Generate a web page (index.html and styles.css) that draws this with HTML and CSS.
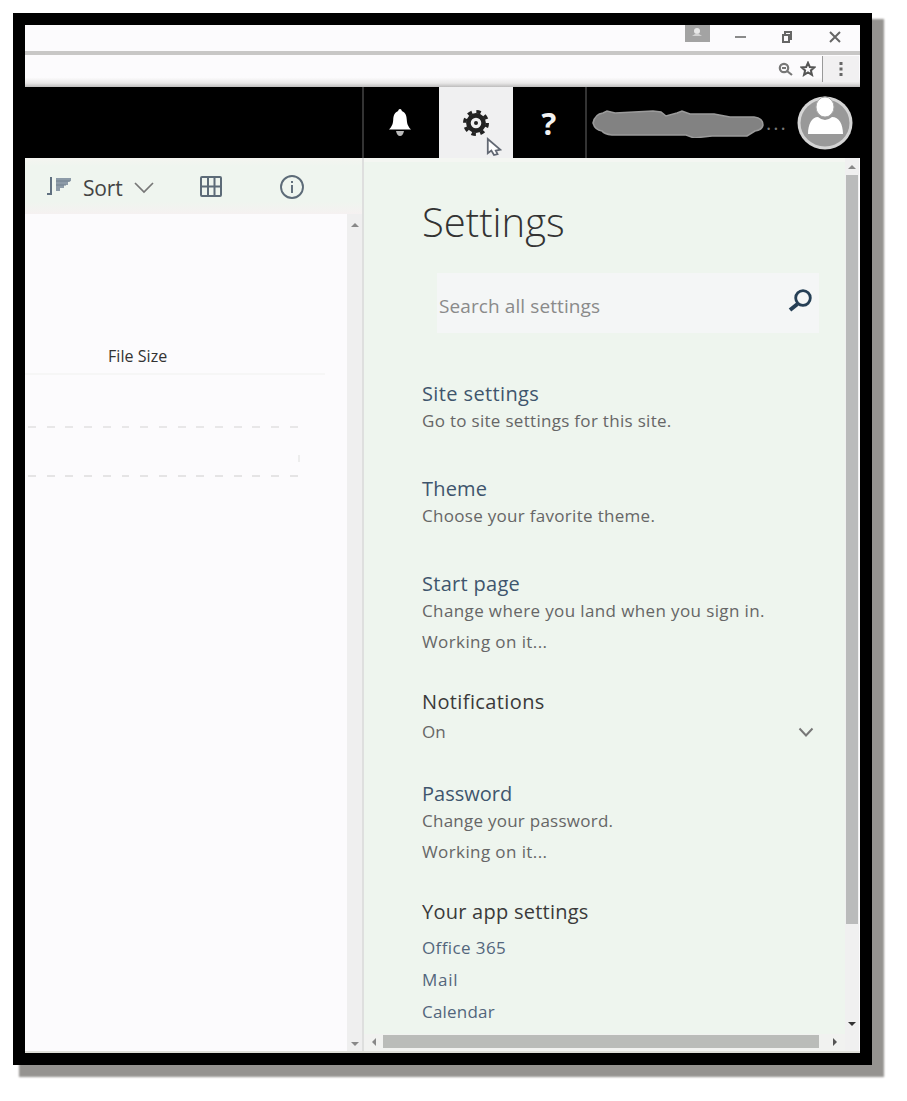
FILE: index.html
```html
<!DOCTYPE html>
<html lang="en">
<head>
<meta charset="utf-8">
<title>Settings</title>
<link rel="stylesheet" href="styles.css">
</head>
<body>
<div class="window">
  <div class="titlebar">
    <svg class="win-user" width="25" height="17" viewBox="0 0 25 17"><rect width="25" height="17" fill="#a3a3a3"/><circle cx="12" cy="6" r="3" fill="#e8e8e8"/><path d="M7 11q5-5 10 0z" fill="#d2d2d2"/></svg>
    <svg class="win-min" width="14" height="14" viewBox="0 0 14 14"><path d="M1 7h11" stroke="#8a8a8a" stroke-width="2"/></svg>
    <svg class="win-max" width="14" height="14" viewBox="0 0 14 14" fill="none" stroke="#666" stroke-width="2"><path d="M3 5h6v7H3zM5 4V2h6v7h-2"/></svg>
    <svg class="win-close" width="14" height="14" viewBox="0 0 14 14"><path d="M2 2l10 10M12 2L2 12" stroke="#666" stroke-width="2"/></svg>
  </div>
  <div class="addressbar">
    <svg class="addr-zoom" width="15" height="15" viewBox="0 0 15 15" fill="none" stroke="#777" stroke-width="2.200"><circle cx="6" cy="6" r="4.200"/><path d="M9 9l5 4M4 6h4"/></svg>
    <svg class="addr-star" width="16" height="16" viewBox="0 0 16 16" fill="none" stroke="#555" stroke-width="2"><path d="M8 1.800l1.800 4.200 4.600.4-3.500 3 1.100 4.500L8 11.500l-4 2.400 1.100-4.500-3.500-3 4.600-.4z"/></svg>
    <div class="addr-menu"><svg width="6" height="16" viewBox="0 0 6 16" fill="#666"><rect x="1.500" y="1" width="3" height="3"/><rect x="1.500" y="6.500" width="3" height="3"/><rect x="1.500" y="12" width="3" height="3"/></svg></div>
  </div>
  <div class="suitebar">
    <div class="suite-cell suite-bell"><svg width="24" height="28" viewBox="0 0 24 28" fill="#fff"><path d="M12 0c1.200 0 1.800 1 1.800 2 4 1.500 4.700 5 5 9 .3 4.500 1.400 6.500 4.200 9.500H1C3.800 17.500 4.900 15.500 5.200 11c.3-4 1-7.500 5-9 0-1 .6-2 1.800-2z"/><path d="M8 22h8q-1 5-4 5t-4-5z" fill="#bbb"/></svg></div>
    <div class="suite-cell suite-gear">
      <svg width="28" height="28" viewBox="0 0 28 28"><g fill="none" stroke="#222"><circle cx="14" cy="14" r="7.600" stroke-width="4.600"/><circle cx="14" cy="14" r="11.200" stroke-width="3.600" stroke-dasharray="4.400 4.400"/></g><circle cx="14" cy="14" r="2" fill="#222"/></svg>
      <svg class="cursor" width="16" height="20" viewBox="0 0 18 22"><path d="M2 2v16l4-3 3 5 4-1-2-4 5-1z" fill="#fff" stroke="#626873" stroke-width="2"/></svg>
    </div>
    <div class="suite-cell suite-help">?</div>
    <div class="suite-user">
      <svg width="172" height="30" viewBox="0 0 172 30"><path d="M1 15Q3 6 11 5L15 3 23 5 61 3 69 4 74 8 85 5 90 3 98 6 122 6 138 9 162 9Q171 10 171 17 170 22 163 23L155 28 120 28 102 30 94 27 60 27 20 27Q12 26 10 23 3 22 1 15z" fill="#828282" stroke="#9b9b9b" stroke-width="1.500"/></svg>
      <span class="ellipsis">...</span>
      <svg class="avatar" width="56" height="54" viewBox="0 0 56 54"><ellipse cx="28" cy="27" rx="27.500" ry="26.500" fill="#d5d5d5"/><ellipse cx="28" cy="27" rx="24.500" ry="23.500" fill="#999"/><path d="M11 38c0-10 4-17 10-17q7 6 14 0c7 0 11 7 11 17z" fill="#fff"/><ellipse cx="28" cy="11" rx="9" ry="10" fill="#fff" stroke="#aaa"/></svg>
    </div>
  </div>
  <div class="body">
    <div class="files">
      <div class="toolbar">
        <svg class="sort-icon" width="26" height="22" viewBox="0 0 26 22"><path d="M5 1v17M1 18h5" fill="none" stroke="#607080" stroke-width="2"/><path d="M10 2h15v3l-3 1v3h-4v3h-4v3h-4z" fill="#8d9ba8"/><path d="M10 5h14M10 9h10" stroke="#71808e"/></svg>
        <span class="sort-label">Sort</span>
        <svg class="sort-chev" width="20" height="12" viewBox="0 0 20 12"><path d="M1 1l9 9 9-9" fill="none" stroke="#777" stroke-width="1.700"/></svg>
        <svg class="grid-icon" width="22" height="22" viewBox="0 0 22 22" fill="none" stroke="#5d6b78" stroke-width="2"><rect x="1" y="1" width="20" height="19" rx="1"/><path d="M8 1v19M14.500 1v19M1 10.500h20"/></svg>
        <svg class="info-icon" width="26" height="26" viewBox="0 0 26 26" fill="none" stroke="#5d6b78" stroke-width="1.900"><circle cx="13" cy="13" r="11"/><path d="M13 11v8M13 7v2"/></svg>
      </div>
      <div class="list">
        <div class="list-main">
          <div class="list-head">File Size</div>
          <div class="drop-row"></div>
        </div>
        <div class="list-scroll"><i class="arrow up"></i><i class="arrow down"></i></div>
      </div>
    </div>
    <div class="panel">
      <div class="panel-main">
        <h1 class="panel-title">Settings</h1>
        <div class="search"><span class="search-text">Search all settings</span><svg width="26" height="24" viewBox="0 0 26 24" fill="none" stroke="#253f55"><circle cx="16" cy="9" r="7.300" stroke-width="2.800"/><path d="M10.500 15L3 21" stroke-width="4"/></svg></div>
        <section class="group"><h2 class="link t-site">Site settings</h2><p class="d-site">Go to site settings for this site.</p></section>
        <section class="group"><h2 class="link t-theme">Theme</h2><p class="d-theme">Choose your favorite theme.</p></section>
        <section class="group group-start"><h2 class="link t-start">Start page</h2><p class="d-start">Change where you land when you sign in.</p><p class="working">Working on it...</p></section>
        <section class="group group-notif"><h2 class="t-notif">Notifications</h2><div class="select"><p>On</p><svg width="16" height="11" viewBox="0 0 16 11"><path d="M1.500 1.500L8 8.500l6.500-7" fill="none" stroke="#777" stroke-width="2"/></svg></div></section>
        <section class="group group-pass"><h2 class="link t-pass">Password</h2><p class="d-pass">Change your password.</p><p class="working">Working on it...</p></section>
        <section class="apps"><h2 class="t-apps">Your app settings</h2><p class="app a-office">Office 365</p><p class="app a-mail">Mail</p><p class="app a-cal">Calendar</p></section>
      </div>
      <div class="hscroll"><i class="arrow left"></i><div class="hthumb"></div><i class="arrow right"></i></div>
    </div>
    <div class="vscroll"><i class="arrow up"></i><div class="vthumb"></div><i class="arrow down dark"></i></div>
  </div>
</div>
</body>
</html>
```
FILE: styles.css
```css
* { box-sizing: border-box; }
body { margin: 0; min-height: 1101px; padding: 13px 0 0 13px; background: #fff; font-family: "Open Sans", "Noto Sans", sans-serif; }
h1, h2, p { margin: 0; font-weight: 400; white-space: nowrap; }
svg { display: block; flex: none; }
.window { width: 859px; height: 1052px; border: 12px solid #000; display: flex; flex-direction: column; background: #fcfbfd; box-shadow: 9px 9px 2px 3px #959390; }
.titlebar { height: 26px; flex: none; display: flex; align-items: flex-start; padding-left: 660px; background: #fcfbfd; }
.win-min { margin: 5px 0 0 24px; }
.win-max { margin: 5px 0 0 32px; }
.win-close { margin: 5px 0 0 34px; }
.addressbar { height: 36px; flex: none; display: flex; align-items: center; padding: 0 0 4px 753px; border-top: 4px solid #c8c7c6; background: linear-gradient(#fcfbfd 70%, #e8e7e7 88%, #bdbcbc); }
.addr-star { margin-left: 7px; }
.addr-menu { margin-left: 6px; width: 37px; height: 26px; border-left: 1px solid #999; background: #f1f0f1; display: flex; align-items: center; padding-left: 15px; }
.suitebar { height: 71px; flex: none; display: flex; background: #000; padding-left: 337px; }
.suite-cell { display: flex; align-items: center; justify-content: center; }
.suite-bell { width: 77px; border-left: 2px solid #333; padding-right: 3px; }
.suite-gear { width: 74px; background: #f0f0f1; position: relative; }
.cursor { position: absolute; left: 47px; top: 50px; }
.suite-help { width: 74px; border-right: 2px solid #333; color: #f2f2f2; font-size: 31px; font-weight: 700; }
.suite-user { flex: 1; display: flex; align-items: center; padding-left: 5px; }
.ellipsis { color: #777; font-size: 20px; width: 26px; padding-left: 2px; letter-spacing: 2px; line-height: 20px; }
.avatar { margin-left: 7px; }
.body { flex: 1; display: flex; min-height: 0; border-bottom: 2px solid #deded8; }
.files { width: 337px; display: flex; flex-direction: column; background: #fcfbfd; }
.toolbar { height: 56px; background: linear-gradient(#f5f5f1, #eff5ef 8px, #eff5ef 44px, #f5f1f1); display: flex; align-items: center; padding: 4px 0 0 21px; color: #444; }
.sort-icon { margin-top: -3px; }
.sort-label { font-size: 21px; margin-left: 11px; width: 42px; letter-spacing: -.2px; }
.sort-chev { margin-left: 9px; }
.grid-icon { margin: -3px 0 0 46px; }
.info-icon { margin: -3px 0 0 57px; }
.list { flex: 1; display: flex; }
.list-main { flex: 1; }
.list-head { margin-top: 129px; height: 32px; width: 300px; border-bottom: 2px solid #f6f6f6; padding-left: 83px; font-size: 16px; line-height: 26px; letter-spacing: .05px; color: #333; }
.drop-row { margin-top: 51px; height: 51px; width: 275px; background: repeating-linear-gradient(90deg, transparent 0 3px, #e8e7e8 3px 11px, transparent 11px 18.700px) 0 0 / 100% 2px no-repeat, repeating-linear-gradient(90deg, transparent 0 3px, #e5e4e5 3px 11px, transparent 11px 18.700px) 0 100% / 100% 2px no-repeat, linear-gradient(#ededed, #ededed) 273px 29px / 4px 7px no-repeat; }
.list-scroll { width: 15px; background: #efefef; display: flex; flex-direction: column; justify-content: space-between; align-items: center; padding: 9px 0 5px; }
.arrow { border: 4px solid transparent; width: 8px; height: 8px; flex: none; }
.up { border-bottom-color: #888; border-top: 0; height: 4px; }
.down { border-top-color: #888; border-bottom: 0; height: 4px; }
.dark { border-top-color: #333; }
.left { border-right-color: #888; border-left: 0; width: 4px; }
.right { border-left-color: #555; border-right: 0; width: 4px; }
.panel { width: 483px; border-left: 2px solid #dedfde; background: #eef5ee; display: flex; flex-direction: column; }
.panel-main { flex: 1; min-height: 0; overflow: hidden; padding: 35px 0 0 58px; color: #666; font-size: 17px; line-height: 26px; border-top: 4px solid #f4f6f2; }
.panel-title { font-size: 40px; line-height: 50px; font-weight: 300; color: #333; }
.search { margin: 26px 0 0 15px; width: 382px; height: 60px; background: #f4f6f6; display: flex; align-items: center; justify-content: space-between; padding: 0 6px 4px 2px; }
.search-text { font-size: 19px; color: #8a8a8a; padding-top: 9px; letter-spacing: .1px; }
.group { height: 95px; }
.search + .group { margin-top: 47px; }
.group h2, .apps h2 { font-size: 20px; line-height: 28px; color: #3a3a3a; }
.group .link { color: #3f556d; }
.group .t-site, .group .t-notif { letter-spacing: .38px; }
.group .t-start { letter-spacing: .3px; }
.group .t-theme { letter-spacing: .2px; }
.apps .t-apps { letter-spacing: .25px; }
.d-site, .d-theme { letter-spacing: .3px; }
.d-start { letter-spacing: .38px; }
.d-pass { letter-spacing: .25px; }
.working { margin-top: 5px; letter-spacing: .4px; }
.group-start { height: 118px; }
.group-notif { height: 92px; }
.group-pass { height: 118px; }
.select { width: 392px; display: flex; align-items: center; justify-content: space-between; padding-top: 3px; }
.apps .app { line-height: 32px; color: #53667c; letter-spacing: .2px; }
.apps .a-office { margin-top: 6px; letter-spacing: .4px; }
.apps .a-mail { letter-spacing: .7px; }
.hscroll { height: 17px; flex: none; background: #f1f2f0; display: flex; align-items: center; padding: 0 3px 2px 8px; }
.hthumb { margin: 0 14px 0 7px; width: 436px; height: 13px; background: #babcb9; }
.vscroll { width: 14px; background: #f0f0f0; display: flex; flex-direction: column; align-items: center; padding-top: 7px; }
.vthumb { margin: 6px 0 98px; width: 12px; height: 749px; background: #babbbb; flex: none; }
```
